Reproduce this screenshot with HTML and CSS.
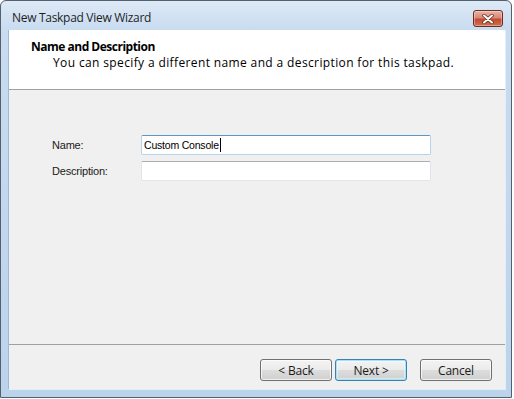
FILE: index.html
```html
<!DOCTYPE html>
<html lang="en">
<head>
<meta charset="UTF-8" />
<title>New Taskpad View Wizard</title>
<link rel="stylesheet" href="styles.css">
</head>
<body>

<div class="window">
  <div class="titlebar">
    <span class="title">New Taskpad View Wizard</span>
    <button class="close" aria-label="Close">
      <svg width="12" height="10" viewBox="0 0 12 10">
        <path d="M2 1.5 L10 8.5 M10 1.5 L2 8.5" stroke="#5a2a20" stroke-width="3.4" stroke-linecap="round" />
        <path d="M2 1.5 L10 8.5 M10 1.5 L2 8.5" stroke="#fff" stroke-width="2" stroke-linecap="round" />
      </svg>
    </button>
  </div>

  <div class="client">
    <div class="header">
      <h1>Name and Description</h1>
      <p>You can specify a different name and a description for this taskpad.</p>
    </div>

    <div class="body">
      <div class="form">
        <label>Name:</label>
        <div class="field focused">Custom Console<span class="caret"></span></div>
        <label>Description:</label>
        <div class="field"></div>
      </div>
    </div>

    <div class="footer">
      <button class="btn">&lt; Back</button>
      <button class="btn default">Next &gt;</button>
      <button class="btn cancel">Cancel</button>
    </div>
  </div>
</div>

</body>
</html>
```

FILE: styles.css
```css
/* Reset */
*, *::before, *::after {
  margin: 0; padding: 0; box-sizing: border-box;
}
html, body {
  height: 100%;
  background: #fff;
  font-family: 'Liberation Sans', Arial, sans-serif;
  color: #000;
  overflow: hidden;
}

.window {
  width: 512px;
  height: 398px;
  display: flex;
  flex-direction: column;
  border: 1px solid #55606e;
  border-radius: 6px 6px 0 0;
  background: linear-gradient(to bottom, #dde9f6 0, #c9dcf0 28px, #bcd3ec 100%);
  padding: 0 6px 8px 7px;
}

.titlebar {
  height: 29px;
  display: flex;
  justify-content: space-between;
  align-items: flex-start;
  padding: 0 2px 0 4px;
}
.title {
  font-family: 'Open Sans', 'Liberation Sans', sans-serif;
  font-size: 12px;
  line-height: 16px;
  margin-top: 9px;
  letter-spacing: -0.3px;
  color: #1e1e1e;
}
.close {
  width: 30px;
  height: 17px;
  margin-top: 9px;
  border: 1px solid #6a2b21;
  border-radius: 3px;
  background: linear-gradient(to bottom, #eab2a6 0, #d98874 45%, #c24a30 55%, #d0704e 100%);
  box-shadow: inset 0 0 0 1px rgba(255,255,255,0.35);
  display: flex;
  align-items: center;
  justify-content: center;
}

.client {
  flex: 1;
  display: flex;
  flex-direction: column;
  background: #f0f0f0;
  border-left: 1px solid #9eb8d6;
  box-shadow: 1px 1px 0 #e4eef9;
}

.header {
  height: 60px;
  background: #fff;
  border-bottom: 1px solid #a0a0a0;
  padding: 9px 0 0 22px;
  font-family: 'Open Sans', 'Liberation Sans', sans-serif;
}
.header h1 {
  font-size: 12px;
  font-weight: 700;
  line-height: 16px;
  letter-spacing: -0.5px;
}
.header p {
  font-size: 12px;
  line-height: 16px;
  padding-left: 22px;
  letter-spacing: 0.37px;
}

.body {
  flex: 1;
  padding: 45px 0 0 43px;
}
.form {
  display: grid;
  grid-template-columns: 89px 290px;
  grid-auto-rows: 20px;
  row-gap: 6px;
  align-items: center;
}
.form label {
  font-size: 11px;
  letter-spacing: -0.2px;
  color: #1a1a1a;
}
.field {
  height: 20px;
  background: #fff;
  border: 1px solid #dfe5ec;
  border-top-color: #abadb3;
  border-radius: 2px;
  font-size: 10.5px;
  letter-spacing: -0.2px;
  line-height: 18px;
  padding-left: 2px;
  display: flex;
  align-items: center;
}
.field.focused {
  border-color: #b8d2ea;
  border-top-color: #5f95c5;
}
.caret {
  display: inline-block;
  width: 1px;
  height: 14px;
  background: #000;
  margin-left: 1px;
}

.footer {
  height: 45px;
  border-top: 1px solid #a0a0a0;
  display: flex;
  justify-content: flex-end;
  align-items: flex-start;
  padding: 14px 13px 0 0;
}
.btn {
  width: 72px;
  height: 22px;
  margin-left: 3px;
  border: 1px solid #707070;
  border-radius: 3px;
  background: linear-gradient(to bottom, #f3f3f3 0, #ebebeb 48%, #dddddd 52%, #cfcfcf 100%);
  box-shadow: inset 0 0 0 1px rgba(255,255,255,0.7);
  font-family: 'Open Sans', 'Liberation Sans', sans-serif;
  font-size: 12px;
  letter-spacing: -0.2px;
  color: #1a1a1a;
}
.btn.default {
  border-color: #3c7fb1;
  box-shadow: inset 0 0 0 1px #9ee4fb, inset 0 0 0 2px rgba(255,255,255,0.4);
}
.btn.cancel {
  margin-left: 13px;
}
```
